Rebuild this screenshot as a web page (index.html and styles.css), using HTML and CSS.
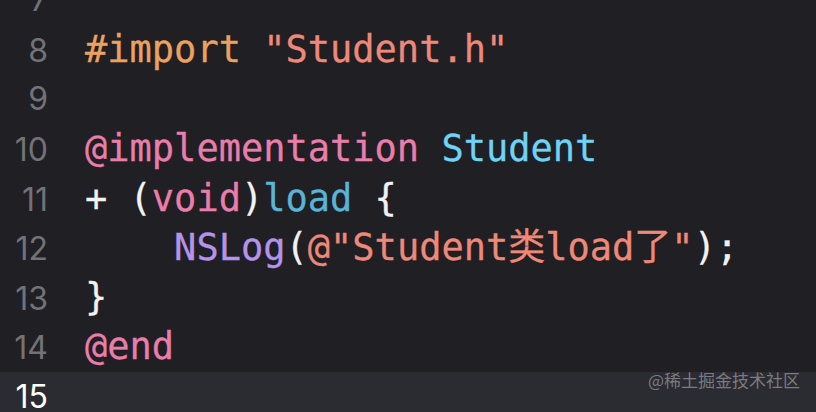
FILE: index.html
```html
<!DOCTYPE html>
<html lang="zh">
<head>
<meta charset="utf-8">
<link rel="stylesheet" href="styles.css">
</head>
<body>
<div class="editor">
  <div class="row"><span class="ln">7</span><span class="code"></span></div>
  <div class="row"><span class="ln">8</span><span class="code"><span class="pp">#import</span> <span class="str">"Student.h"</span></span></div>
  <div class="row"><span class="ln">9</span><span class="code"></span></div>
  <div class="row"><span class="ln">10</span><span class="code"><span class="kw">@implementation</span> <span class="ty">Student</span></span></div>
  <div class="row"><span class="ln">11</span><span class="code">+ (<span class="kw">void</span>)<span class="decl">load</span> {</span></div>
  <div class="row"><span class="ln">12</span><span class="code">    <span class="fn">NSLog</span>(<span class="str">@"Student类load了"</span>);</span></div>
  <div class="row"><span class="ln">13</span><span class="code">}</span></div>
  <div class="row"><span class="ln">14</span><span class="code"><span class="kw">@end</span></span></div>
  <div class="row current"><span class="ln">15</span><span class="code"></span></div>
</div>
<div class="watermark">@稀土掘金技术社区</div>
</body>
</html>
```
FILE: styles.css
```css
html, body {
  margin: 0;
  padding: 0;
  background: #1f1f24;
  width: 816px;
  height: 412px;
  overflow: hidden;
}
.editor {
  margin-top: -24.8px;
  display: flex;
  flex-direction: column;
}
.row {
  display: flex;
  align-items: baseline;
  height: 49.6px;
  line-height: 49.6px;
}
.row.current {
  background: #2b2c31;
}
.ln {
  width: 48px;
  text-align: right;
  font-family: Inter, "Noto Sans", sans-serif;
  font-size: 32px;
  color: #727277;
  flex: none;
}
.current .ln {
  color: #ffffff;
}
.code {
  padding-left: 37px;
  white-space: pre;
  font-family: "DejaVu Sans Mono", "Noto Sans CJK SC", monospace;
  font-size: 37px;
  color: #f2f2f2;
  -webkit-text-stroke: 0.3px currentColor;
}
.pp { color: #eda15f; }
.str { color: #ef8878; }
.kw { color: #ea7eab; }
.ty { color: #6ed3f4; }
.decl { color: #58b5d5; }
.fn { color: #b693ea; }
.watermark {
  position: absolute;
  right: 16px;
  bottom: 20px;
  font-family: "Noto Sans CJK SC", sans-serif;
  font-size: 17px;
  color: rgba(150, 150, 155, 0.75);
}
```
